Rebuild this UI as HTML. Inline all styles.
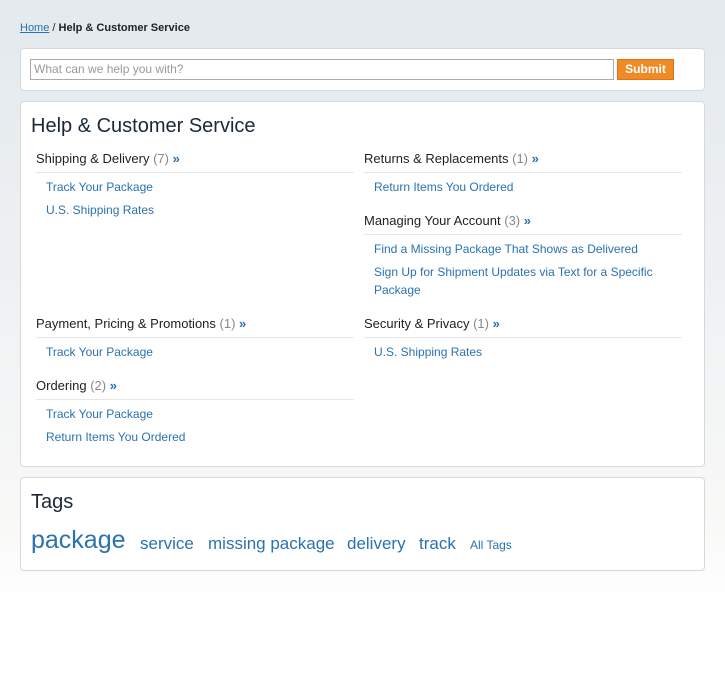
<!DOCTYPE html>
<html><head><meta charset="utf-8"><style>
body{margin:0;width:725px;height:680px;position:relative;font-family:"Liberation Sans",sans-serif;background:linear-gradient(180deg,#e3e9ee 0%,#eef1f3 40%,#f8f8f7 75%,#fff 90%);overflow:hidden}
.a{position:absolute;white-space:nowrap}
.box{position:absolute;left:20px;width:683px;background:#fff;border:1px solid #d8d8d8;border-radius:4px}
.l{color:#2a72b0;font-size:12px}
.h{color:#222;font-size:13px}
.h span{color:#888}.h b{color:#2a72b0;font-weight:bold}
.rule{position:absolute;height:1px;background:#e6e6e6}
.t{color:#2a72b0}
</style></head><body>
<div class="a" style="left:20px;top:22px;font-size:11px;color:#222"><span style="color:#2a72b0;text-decoration:underline">Home</span> / <b>Help &amp; Customer Service</b></div>
<div class="box" style="top:48px;height:41px"></div>
<div class="a" style="left:30px;top:59px;height:19px;border:1px solid #aaa;background:#fff;font-size:12px;color:#999;line-height:19px;padding-left:3px;width:579px">What can we help you with?</div>
<div class="a" style="left:617px;top:59px;width:57px;height:21px;background:#f08a24;border:1px solid #d9741a;box-sizing:border-box;color:#fff;font-weight:bold;font-size:12px;text-align:center;line-height:19px">Submit</div>
<div class="box" style="top:101px;height:364px"></div>
<div class="a" style="left:31px;top:115px;font-size:20px;color:#1a2838">Help &amp; Customer Service</div>

<div class="a h" style="left:36px;top:151px">Shipping &amp; Delivery <span>(7)</span> <b>»</b></div>
<div class="rule" style="left:36px;top:172px;width:318px"></div>
<div class="a l" style="left:46px;top:180px">Track Your Package</div>
<div class="a l" style="left:46px;top:203px">U.S. Shipping Rates</div>

<div class="a h" style="left:364px;top:151px">Returns &amp; Replacements <span>(1)</span> <b>»</b></div>
<div class="rule" style="left:364px;top:172px;width:318px"></div>
<div class="a l" style="left:374px;top:180px">Return Items You Ordered</div>

<div class="a h" style="left:364px;top:213px">Managing Your Account <span>(3)</span> <b>»</b></div>
<div class="rule" style="left:364px;top:234px;width:318px"></div>
<div class="a l" style="left:374px;top:242px">Find a Missing Package That Shows as Delivered</div>
<div class="a l" style="left:374px;top:265px">Sign Up for Shipment Updates via Text for a Specific</div>
<div class="a l" style="left:374px;top:283px">Package</div>

<div class="a h" style="left:36px;top:316px">Payment, Pricing &amp; Promotions <span>(1)</span> <b>»</b></div>
<div class="rule" style="left:36px;top:337px;width:318px"></div>
<div class="a l" style="left:46px;top:345px">Track Your Package</div>

<div class="a h" style="left:364px;top:316px">Security &amp; Privacy <span>(1)</span> <b>»</b></div>
<div class="rule" style="left:364px;top:337px;width:318px"></div>
<div class="a l" style="left:374px;top:345px">U.S. Shipping Rates</div>

<div class="a h" style="left:36px;top:378px">Ordering <span>(2)</span> <b>»</b></div>
<div class="rule" style="left:36px;top:399px;width:318px"></div>
<div class="a l" style="left:46px;top:407px">Track Your Package</div>
<div class="a l" style="left:46px;top:430px">Return Items You Ordered</div>

<div class="box" style="top:477px;height:92px"></div>
<div class="a" style="left:31px;top:491px;font-size:20px;color:#1a2838">Tags</div>
<div class="a t" style="left:31px;top:526px;font-size:25px">package</div>
<div class="a t" style="left:140px;top:534px;font-size:17px">service</div>
<div class="a t" style="left:208px;top:534px;font-size:17px">missing package</div>
<div class="a t" style="left:347px;top:534px;font-size:17px">delivery</div>
<div class="a t" style="left:419px;top:534px;font-size:17px">track</div>
<div class="a t" style="left:470px;top:538px;font-size:12px">All Tags</div>
</body></html>
